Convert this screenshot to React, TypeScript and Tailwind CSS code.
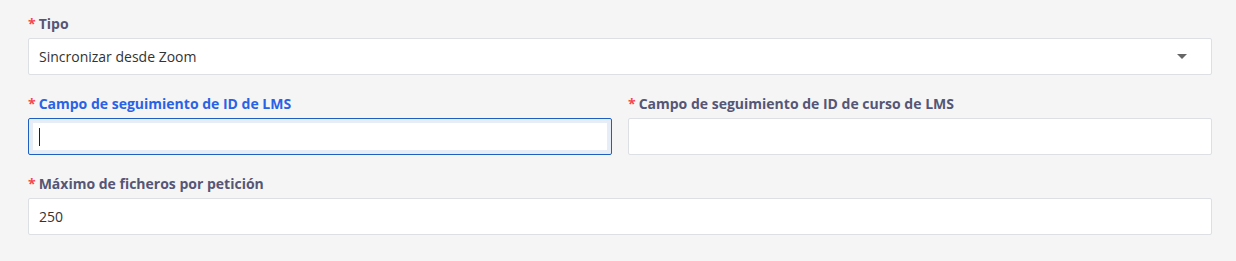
const FONT = { fontFamily: '"Open Sans", "Noto Sans", sans-serif' }

function Label({ text, active }: { text: string; active?: boolean }) {
  return (
    <div className={`h-5 mb-1 flex items-center text-[14px] font-bold leading-5 ${active ? 'text-[#2a62e6]' : 'text-[#555675]'}`}>
      <span className="text-[#f5474b] mr-[3px]">*</span>
      {text}
    </div>
  )
}

function Field({ value }: { value?: string }) {
  return (
    <div className="h-[37px] bg-white border border-[#dcdfe4] rounded-[2px] flex items-center px-[10px] text-[14px] text-[#333]">
      {value}
    </div>
  )
}

export default function App() {
  return (
    <main className="min-h-[261px] bg-[#f5f5f5] pl-[28px] pr-[24px] pt-[14px]" style={FONT}>
      {/* Tipo */}
      <div className="mb-[19px]">
        <Label text="Tipo" />
        <div className="h-[37px] bg-white border border-[#dcdfe4] rounded-[2px] flex items-center justify-between pl-[10px] pr-[24px] text-[14px] text-[#333]">
          <span>Sincronizar desde Zoom</span>
          <span className="w-0 h-0 border-l-[5px] border-r-[5px] border-t-[5px] border-l-transparent border-r-transparent border-t-[#666]" />
        </div>
      </div>

      {/* Campos LMS */}
      <div className="grid grid-cols-2 gap-4 mb-[19px]">
        <div>
          <Label text="Campo de seguimiento de ID de LMS" active />
          <div className="h-[37px] bg-white border border-[#1f5fbf] rounded-[2px] shadow-[inset_0_0_0_4px_#e6edf6] flex items-center px-[10px]">
            <span className="w-px h-[18px] bg-[#222]" />
          </div>
        </div>
        <div>
          <Label text="Campo de seguimiento de ID de curso de LMS" />
          <Field />
        </div>
      </div>

      {/* Máximo */}
      <div>
        <Label text="Máximo de ficheros por petición" />
        <Field value="250" />
      </div>
    </main>
  )
}
